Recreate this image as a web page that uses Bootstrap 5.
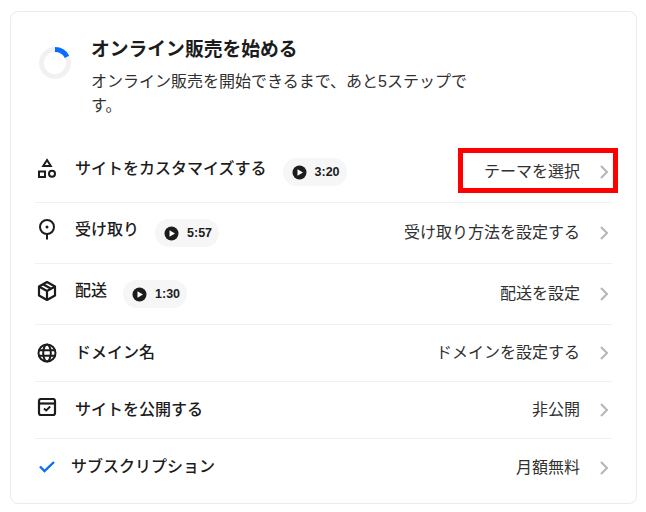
<!DOCTYPE html>
<html lang="ja">
<head>
    <meta charset="UTF-8">
    <meta name="viewport" content="width=device-width, initial-scale=1.0">
    <title>オンライン販売を始める</title>
    <link rel="stylesheet" href="https://cdn.jsdelivr.net/npm/bootstrap@5.3.0/dist/css/bootstrap.min.css">
    <style>
        body { background: #fff; color: #1c1c1c; font-family: "Liberation Sans", "Noto Sans CJK JP", sans-serif; font-size: 16px; }
        .setup-card { margin: 11px 9px 0 10px; height: 493px; border: 1px solid #ebebeb; border-radius: 8px; padding: 0 24px; }
        .setup-head { padding: 22px 4px 0; height: 130px; gap: 20px; }
        .setup-ring { width: 32px; height: 32px; margin-top: 13px; flex: none; }
        .setup-title { font-size: 18.8px; font-weight: 700; line-height: 30px; margin: 1px 0 5px; }
        .setup-desc { width: 376px; line-height: 24px; margin: 0; color: #303030; }
        .setup-row { position: relative; border-bottom: 1px solid #f0f0f0; height: 61px; padding-right: 2px; }
        .setup-row.short-row { height: 57px; }
        .setup-row.last-row { border-bottom: 0; }
        .row-icon { width: 24px; height: 24px; flex: none; margin-right: 16px; margin-top: -6px; }
        .row-name { font-weight: 500; line-height: 24px; margin-top: -6px; }
        .short-row .row-icon, .short-row .row-name { margin-top: -1px; }
        .check-icon { margin-right: 12px; }
        .play-pill { background: #f6f6f6; border-radius: 14px; height: 28px; padding: 0 7px 0 9px; margin-left: 16px; gap: 8px; font-size: 12.5px; font-weight: 700; }
        .row-action { color: #303030; line-height: 24px; }
        .row-chevron { width: 12px; height: 16px; margin-left: 18px; flex: none; }
        .red-mark { position: absolute; left: 423px; top: 6px; width: 160px; height: 45px; border: 5px solid #f00; }
    </style>
</head>
<body>
    <div class="setup-card">
        <div class="setup-head d-flex">
            <svg class="setup-ring" viewBox="0 0 32 32">
                <circle cx="16" cy="16" r="13.5" fill="none" stroke="#f1f1f1" stroke-width="5"/>
                <path d="M16 2.5A13.500 13.500 0 0 1 28 9.800" fill="none" stroke="#0a6cff" stroke-width="5"/>
            </svg>
            <div>
                <h1 class="setup-title">オンライン販売を始める</h1>
                <p class="setup-desc">オンライン販売を開始できるまで、あと5ステップです。</p>
            </div>
        </div>

        <!-- Steps -->
        <div class="setup-row d-flex align-items-center">
            <svg class="row-icon" viewBox="0 0 24 24" fill="none" stroke="#1c1c1c" stroke-width="2">
                <path d="M12 3 15.800 9H8.200z"/><rect x="4" y="14.500" width="6" height="5.500"/><circle cx="17" cy="16.800" r="3"/>
            </svg>
            <span class="row-name">サイトをカスタマイズする</span>
            <span class="play-pill d-inline-flex align-items-center">
                <svg width="15" height="15" viewBox="0 0 15 15"><circle cx="7.500" cy="7.500" r="7" fill="#1c1c1c"/><path d="M5.500 4.200 11 7.500 5.500 10.800z" fill="#fff"/></svg>3:20
            </span>
            <span class="row-action ms-auto">テーマを選択</span>
            <svg class="row-chevron" viewBox="0 0 12 16" fill="none" stroke="#b5b5b5" stroke-width="2"><path d="M3 2 9 8 3 14"/></svg>
            <div class="red-mark"></div>
        </div>
        <div class="setup-row d-flex align-items-center">
            <svg class="row-icon" viewBox="0 0 24 24" fill="none" stroke="#1c1c1c" stroke-width="2">
                <circle cx="12" cy="9" r="7"/><circle cx="12" cy="9" r="1.500" fill="#1c1c1c" stroke="none"/><path d="M12 16v5.500"/>
            </svg>
            <span class="row-name">受け取り</span>
            <span class="play-pill d-inline-flex align-items-center">
                <svg width="15" height="15" viewBox="0 0 15 15"><circle cx="7.500" cy="7.500" r="7" fill="#1c1c1c"/><path d="M5.500 4.200 11 7.500 5.500 10.800z" fill="#fff"/></svg>5:57
            </span>
            <span class="row-action ms-auto">受け取り方法を設定する</span>
            <svg class="row-chevron" viewBox="0 0 12 16" fill="none" stroke="#b5b5b5" stroke-width="2"><path d="M3 2 9 8 3 14"/></svg>
        </div>
        <div class="setup-row d-flex align-items-center">
            <svg class="row-icon" viewBox="0 0 24 24" fill="none" stroke="#1c1c1c" stroke-width="2.200" stroke-linejoin="round">
                <path d="M12 3 20 7.500V16.500L12 21 4 16.500V7.500z"/><path d="M4 7.500 12 12 20 7.500M12 12v9M8 5.300l8 4.500"/>
            </svg>
            <span class="row-name">配送</span>
            <span class="play-pill d-inline-flex align-items-center">
                <svg width="15" height="15" viewBox="0 0 15 15"><circle cx="7.500" cy="7.500" r="7" fill="#1c1c1c"/><path d="M5.500 4.200 11 7.500 5.500 10.800z" fill="#fff"/></svg>1:30
            </span>
            <span class="row-action ms-auto">配送を設定</span>
            <svg class="row-chevron" viewBox="0 0 12 16" fill="none" stroke="#b5b5b5" stroke-width="2"><path d="M3 2 9 8 3 14"/></svg>
        </div>
        <div class="setup-row short-row d-flex align-items-center">
            <svg class="row-icon" viewBox="0 0 24 24" fill="none" stroke="#1c1c1c" stroke-width="2">
                <circle cx="12" cy="12" r="8.500"/><ellipse cx="12" cy="12" rx="3.800" ry="8.500"/><path d="M3.500 9.300h17M3.500 14.700h17"/>
            </svg>
            <span class="row-name">ドメイン名</span>
            <span class="row-action ms-auto">ドメインを設定する</span>
            <svg class="row-chevron" viewBox="0 0 12 16" fill="none" stroke="#b5b5b5" stroke-width="2"><path d="M3 2 9 8 3 14"/></svg>
        </div>
        <div class="setup-row short-row d-flex align-items-center">
            <svg class="row-icon" viewBox="0 0 24 24" fill="none" stroke="#1c1c1c" stroke-width="2.200">
                <rect x="4" y="1" width="16" height="16" rx="2"/><path d="M4 5.500h16"/><path d="M9 10.500l2.200 2 4-4" stroke-width="1.800"/>
            </svg>
            <span class="row-name">サイトを公開する</span>
            <span class="row-action ms-auto">非公開</span>
            <svg class="row-chevron" viewBox="0 0 12 16" fill="none" stroke="#b5b5b5" stroke-width="2"><path d="M3 2 9 8 3 14"/></svg>
        </div>
        <div class="setup-row short-row last-row d-flex align-items-center">
            <svg class="row-icon check-icon" viewBox="0 0 24 24" fill="none" stroke="#0a6cff" stroke-width="2.400"><path d="M5 11.500 9.500 16 19 7"/></svg>
            <span class="row-name check-name">サブスクリプション</span>
            <span class="row-action ms-auto">月額無料</span>
            <svg class="row-chevron" viewBox="0 0 12 16" fill="none" stroke="#b5b5b5" stroke-width="2"><path d="M3 2 9 8 3 14"/></svg>
        </div>
    </div>
    <script src="https://cdn.jsdelivr.net/npm/bootstrap@5.3.0/dist/js/bootstrap.bundle.min.js"></script>
</body>
</html>
